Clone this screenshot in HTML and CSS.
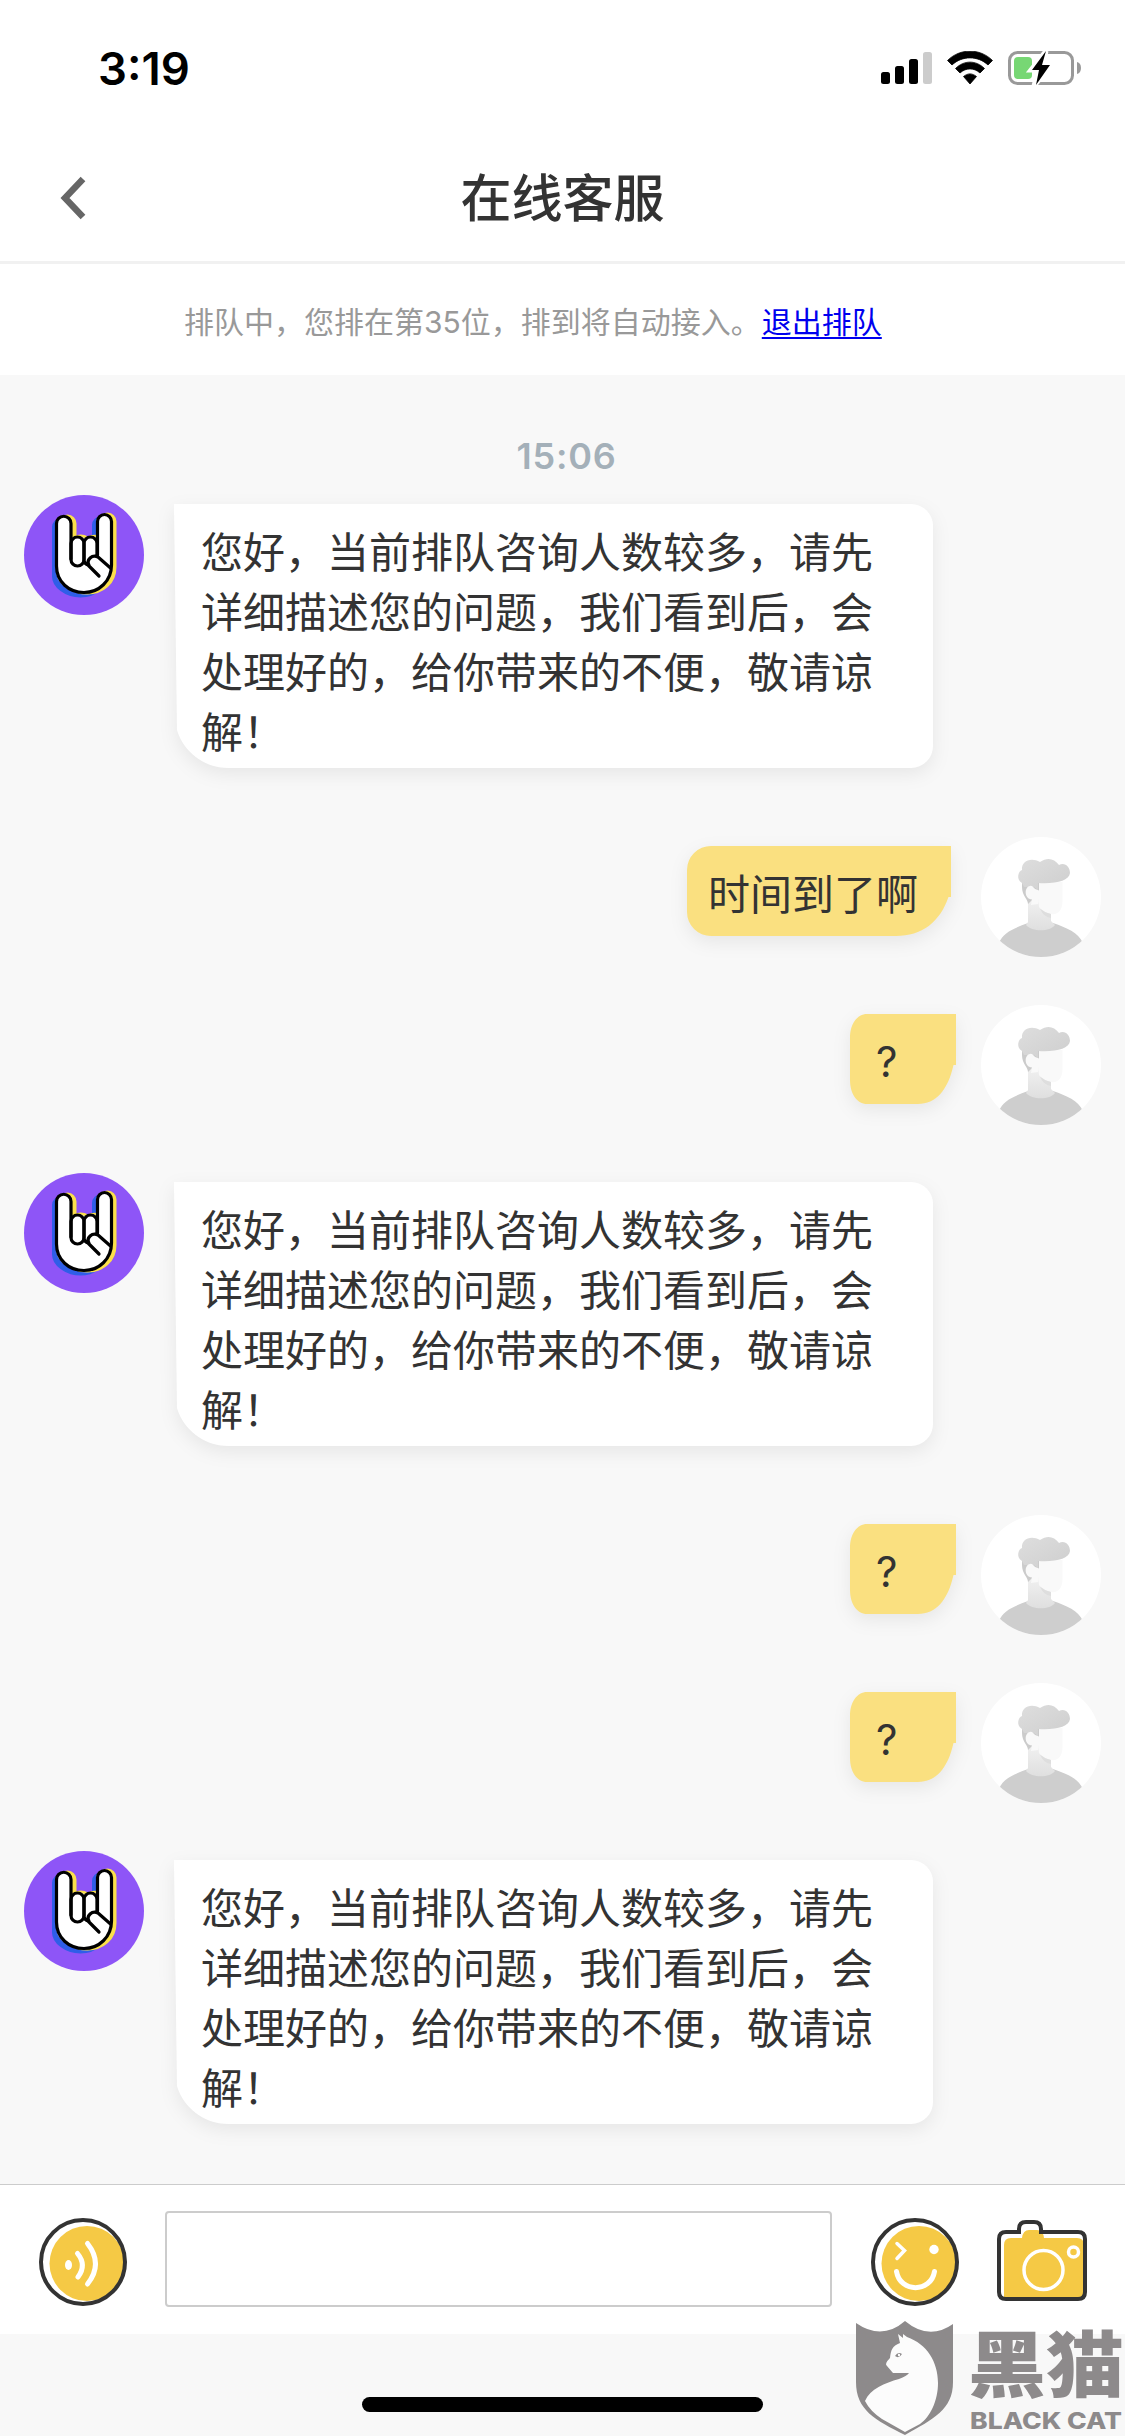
FILE: index.html
```html
<!DOCTYPE html>
<html lang="zh-CN">
<head>
<meta charset="utf-8">
<title>在线客服</title>
<link rel="stylesheet" href="styles.css">
</head>
<body>
<svg class="defs" width="0" height="0" aria-hidden="true">
  <defs>
    <linearGradient id="hair" x1="0" y1="0" x2="1" y2="1"><stop offset="0" stop-color="#dedede"/><stop offset="1" stop-color="#cecece"/></linearGradient>
    <linearGradient id="neck" x1="0" y1="0" x2="0" y2="1"><stop offset="0" stop-color="#f9f9f9"/><stop offset="1" stop-color="#dfdfdf"/></linearGradient>
    <clipPath id="disc"><circle cx="60" cy="60" r="60"/></clipPath>
    <path id="hand" d="M32.500 78V28.500a7 7 0 0 1 15 0V43q5-4 13 0q5-3 12-1V26.500a7.500 7.500 0 0 1 15 0V72C87.500 88 75 98 60 98S32.500 88 32.500 78Z"/>
    <symbol id="bot" viewBox="0 0 120 120">
      <circle cx="60" cy="60" r="60" fill="#8e55f7"/>
      <use href="#hand" transform="translate(-3.500 3.500)" fill="#2f5ee8" stroke="#2f5ee8" stroke-width="2"/>
      <use href="#hand" transform="translate(3.500 0)" fill="#fbe04b" stroke="#fbe04b" stroke-width="3"/>
      <use href="#hand" fill="#fff"/>
      <g fill="none" stroke="#000" stroke-width="3.200" stroke-linecap="round" stroke-linejoin="round">
        <path d="M47 64V28.500a7 7 0 0 0-14.500 0V71C32.500 87 45 97.500 60 97.500S87.500 86 87.500 70V26.500a7 7 0 0 0-14 0V60"/>
        <rect x="47" y="42" width="13" height="29" rx="6.500"/>
        <path d="M60 48.500a6.500 6.500 0 0 1 13 0V60M60 48v18q1 3 4 4L75 81M65 70c-3-5 3-11 9-8L86.500 73"/>
      </g>
    </symbol>
    <symbol id="user" viewBox="0 0 120 120">
      <circle cx="60" cy="60" r="60" fill="#fff"/>
      <g clip-path="url(#disc)">
        <path d="M18 106C22 95 34 91 47 86H72C86 91 97 95 102 106V121H18Z" fill="#cecece"/>
        <path d="M47 60L58 48L70 62V84L74 88C69 95 51 95 45 88L47 85Z" fill="url(#neck)"/>
        <path d="M55 45H81.500V64C81.500 73 77 78 70 77C64 76 61 74 58 70Z" fill="#f9f9f9"/>
        <path d="M59 71.500Q65 76 70 77V81Q62 80 59 71.500Z" fill="#dedede"/>
        <path d="M41 44H58V53L52 57V62L47 67C47 62 41 59 41 50Z" fill="#cbcbcb"/>
        <path d="M41 46C35 43 37 34 41 33C40 24 50 20 59 25C66 20 73 21 78 28C84 25 89 30 89 36C88 44 75 47 57 46V53L53 50H43Z" fill="url(#hair)"/>
        <path d="M51 62.500C43 62 43 50 49 49C52 48 52 52 57 53V67L50 68Z" fill="#f9f9f9"/>
      </g>
    </symbol>
    <symbol id="bubble-in" viewBox="0 0 759 264">
      <path d="M0 0H737A22 22 0 0 1 759 22V242A22 22 0 0 1 737 264H55C28 264 9 246 3 226Z" fill="#fff"/>
    </symbol>
    <symbol id="bubble-out" viewBox="0 0 264 90">
      <path d="M24 0H264V51H261.500C253 76 235 90 209 90H24A24 24 0 0 1 0 66V24A24 24 0 0 1 24 0Z" fill="#fae080"/>
    </symbol>
    <symbol id="bubble-short" viewBox="0 0 106 90">
      <path d="M17 0H106V51H103.500C98 76 86 90 68 90H17C7 90 0 80 0 66V24C0 10 7 0 17 0Z" fill="#fae080"/>
    </symbol>
  </defs>
</svg>

<header class="top">
  <div class="status">
    <span class="clock">3:19</span>
    <svg class="indicators" width="202" height="36" viewBox="0 0 202 36">
      <rect x="0" y="21" width="9" height="12" rx="2.500"/><rect x="14" y="15" width="9" height="18" rx="2.500"/><rect x="28" y="8" width="9" height="25" rx="2.500"/><rect x="42" y="1" width="9" height="32" rx="2.500" fill="#ccc"/>
      <path d="M66.500 9.500C79-3 99-3 111.500 9.500L107 14C97 4.500 81 4.500 71 14ZM74.500 17.500C83 9 95 9 103.500 17.500L99 22C93 16.500 85 16.500 79 22ZM82.500 25.500C87 22 91 22 95.500 25.500L89 33Z" stroke="#000" stroke-width=".8" stroke-linejoin="round"/>
      <rect x="128.500" y="1.500" width="63" height="31" rx="8" fill="none" stroke="#999" stroke-width="3"/>
      <rect x="133" y="6" width="18" height="22" rx="4" fill="#77d774"/>
      <path d="M196 11q4 1 4 6t-4 6Z" fill="#999"/>
      <path d="M165 0L150 19H157L153 35L170 14H162Z" fill="#fff" stroke="#fff" stroke-width="5"/>
      <path d="M165 0L151 19H158L155 34L169 14H161Z"/>
    </svg>
  </div>
  <div class="titlebar">
    <svg class="back" width="28" height="44" viewBox="0 0 28 44"><path d="M24 3L6 22L24 41" fill="none" stroke="#666" stroke-width="6.500"/></svg>
    <h1>在线客服</h1>
  </div>
</header>
<div class="queue"><span>排队中，您排在第35位，排到将自动接入。</span><a href="#">退出排队</a></div>

<main class="chat">
  <time>15:06</time>
  <div class="row in"><svg class="avatar"><use href="#bot"/></svg><div class="bubble"><svg class="shape"><use href="#bubble-in"/></svg><p>您好，当前排队咨询人数较多，请先详细描述您的问题，我们看到后，会处理好的，给你带来的不便，敬请谅解！</p></div></div>
  <div class="row out"><div class="bubble long"><svg class="shape"><use href="#bubble-out"/></svg><p>时间到了啊</p></div><svg class="avatar"><use href="#user"/></svg></div>
  <div class="row out"><div class="bubble short"><svg class="shape"><use href="#bubble-short"/></svg><p>?</p></div><svg class="avatar"><use href="#user"/></svg></div>
  <div class="row in"><svg class="avatar"><use href="#bot"/></svg><div class="bubble"><svg class="shape"><use href="#bubble-in"/></svg><p>您好，当前排队咨询人数较多，请先详细描述您的问题，我们看到后，会处理好的，给你带来的不便，敬请谅解！</p></div></div>
  <div class="row out"><div class="bubble short"><svg class="shape"><use href="#bubble-short"/></svg><p>?</p></div><svg class="avatar"><use href="#user"/></svg></div>
  <div class="row out"><div class="bubble short"><svg class="shape"><use href="#bubble-short"/></svg><p>?</p></div><svg class="avatar"><use href="#user"/></svg></div>
  <div class="row in"><svg class="avatar"><use href="#bot"/></svg><div class="bubble"><svg class="shape"><use href="#bubble-in"/></svg><p>您好，当前排队咨询人数较多，请先详细描述您的问题，我们看到后，会处理好的，给你带来的不便，敬请谅解！</p></div></div>
</main>

<footer class="composer">
  <svg class="voice" width="88" height="88" viewBox="0 0 88 88">
    <circle cx="48" cy="45.500" r="37.500" fill="#f5c945"/><circle cx="44" cy="44" r="42" fill="none" stroke="#333" stroke-width="4"/>
    <ellipse cx="29.500" cy="47" rx="3.500" ry="5" fill="#fff"/>
    <path d="M38.500 35.500Q48 47 39 59M48.500 25.500Q64.500 46 48.500 66" fill="none" stroke="#fff" stroke-width="5" stroke-linecap="round"/>
  </svg>
  <input class="field" type="text" aria-label="输入消息">
  <svg class="smile" width="88" height="88" viewBox="0 0 88 88">
    <circle cx="48" cy="45.500" r="37.500" fill="#f5c945"/><circle cx="44" cy="44" r="42" fill="none" stroke="#333" stroke-width="4"/>
    <circle cx="63" cy="31.500" r="4.700" fill="#fff"/>
    <path d="M26 25.500L33.500 32.500L26 40.500" fill="none" stroke="#fff" stroke-width="3.500" stroke-linecap="round"/>
    <path d="M25.500 53.500C29 75 60 75 63.500 53.500" fill="none" stroke="#fff" stroke-width="5" stroke-linecap="round"/>
  </svg>
  <svg class="camera" width="90" height="82" viewBox="0 0 90 82">
    <path d="M7 25Q7 18 14 18H25Q26 10 32 10H40Q46 10 47 18H80Q87 18 87 25V79H7Z" fill="#f5c945"/>
    <path d="M2 19Q2 12 9 12H22V9Q22 2 29 2H37Q44 2 44 9V12H81Q88 12 88 19V72Q88 79 81 79H9Q2 79 2 72Z" fill="none" stroke="#333" stroke-width="4"/>
    <circle cx="46.500" cy="50" r="19.500" fill="none" stroke="#fff" stroke-width="3.500"/><circle cx="76.500" cy="32" r="5" fill="none" stroke="#fff" stroke-width="3.500"/>
  </svg>
</footer>
<div class="home"><i></i></div>

<svg class="watermark" width="272" height="118" viewBox="853 2318 272 118">
  <path d="M856 2323Q882 2341 905 2321Q929 2341 953 2324V2382C953 2410 933 2419 905 2435C875 2420 856 2410 856 2382Z" fill="#8d8a8b"/>
  <path d="M898 2334L903 2338V2334L907 2337C927 2344 938 2362 938 2383C938 2401 930 2417 920 2424L905 2432L882 2419Q870 2411 865 2401C870 2389 885 2383 899 2379Q907 2376 909 2373H893L887 2366Q884 2364 890 2358C891 2350 892 2346 900 2343Z" fill="#fcfcfc"/>
  <path d="M895 2356Q898 2351 902 2354Q899 2359 895 2356Z" fill="#8d8a8b"/><circle cx="899" cy="2355" r="1.200" fill="#fff"/>
  <text class="wm-cn" x="968" y="2391" textLength="156" lengthAdjust="spacingAndGlyphs">黑猫</text>
  <text class="wm-en" x="970" y="2428.500" textLength="152" lengthAdjust="spacingAndGlyphs">BLACK CAT</text>
</svg>
</body>
</html>
```
FILE: styles.css
```css
* { box-sizing: border-box; }
body {
  margin: 0;
  width: 1125px;
  height: 2436px;
  display: flex;
  flex-direction: column;
  position: relative;
  overflow: hidden;
  background: #f8f8f8;
  color: #333;
  font-family: Inter, "Noto Sans CJK SC", sans-serif;
}
svg { display: block; flex: none; }
.defs { position: absolute; }
.top { height: 264px; background: #fff; border-bottom: 3px solid #f1f1f1; }
.status { height: 132px; display: flex; justify-content: space-between; padding: 51px 42px 0 98px; }
.clock { font-size: 45.5px; font-weight: 600; line-height: 36px; color: #000; }
.titlebar { height: 129px; display: grid; grid-template-columns: 28px 1fr 28px; align-items: center; padding: 4px 59px 0; }
.back { margin-top: -2px; }
h1 { margin: 0; text-align: center; font-size: 51px; font-weight: 500; line-height: 72px; }
.queue { height: 111px; background: #fff; padding: 36px 0 0 184px; font-size: 30px; line-height: 45px; color: #999; white-space: nowrap; }
.queue a { margin-left: 1px; color: #00e; text-decoration-thickness: 2px; text-underline-offset: 4px; }
.chat { height: 1809px; }
time { display: block; height: 120px; padding-top: 61px; text-align: center; font-size: 36px; font-weight: 600; line-height: 40px; letter-spacing: .8px; color: #a4b0b9; padding-left: 8px; }
.row { display: flex; padding: 0 24px; }
.in { height: 342px; gap: 30px; }
.out { height: 168px; justify-content: flex-end; }
.avatar { width: 120px; height: 120px; }
.bubble { position: relative; width: 759px; height: 264px; margin-top: 9px; padding: 19px 60px 0 27px; }
.shape { position: absolute; left: 0; top: 0; width: 100%; height: 100%; overflow: visible; filter: drop-shadow(0 6px 9px rgba(0, 0, 0, .07)); }
.bubble p { position: relative; margin: 0; font-size: 42px; line-height: 60px; }
.long { width: 264px; height: 90px; margin-right: 30px; padding: 19px 0 0 21px; }
.short { width: 106px; height: 90px; margin-right: 25px; padding: 18px 0 0 26px; }
.composer { height: 150px; display: flex; align-items: flex-start; background: #fff; border-top: 1px solid #ccc; padding: 0 38px 0 39px; }
.field { width: 667px; height: 96px; margin: 26px 39px 0 38px; border: 2px solid #ccc; border-radius: 4px; background: #fff; }
.voice, .smile { margin-top: 33px; }
.camera { margin: 35px 0 0 38px; }
.home { flex: 1; display: flex; justify-content: center; padding-top: 63px; }
.home i { width: 401px; height: 15px; border-radius: 8px; background: #000; }
.watermark { position: absolute; left: 853px; top: 2318px; fill: #8d8a8b; }
.wm-cn { font: 900 72px "Noto Sans CJK SC", sans-serif; }
.wm-en { font: 800 23px Inter, sans-serif; }
```
